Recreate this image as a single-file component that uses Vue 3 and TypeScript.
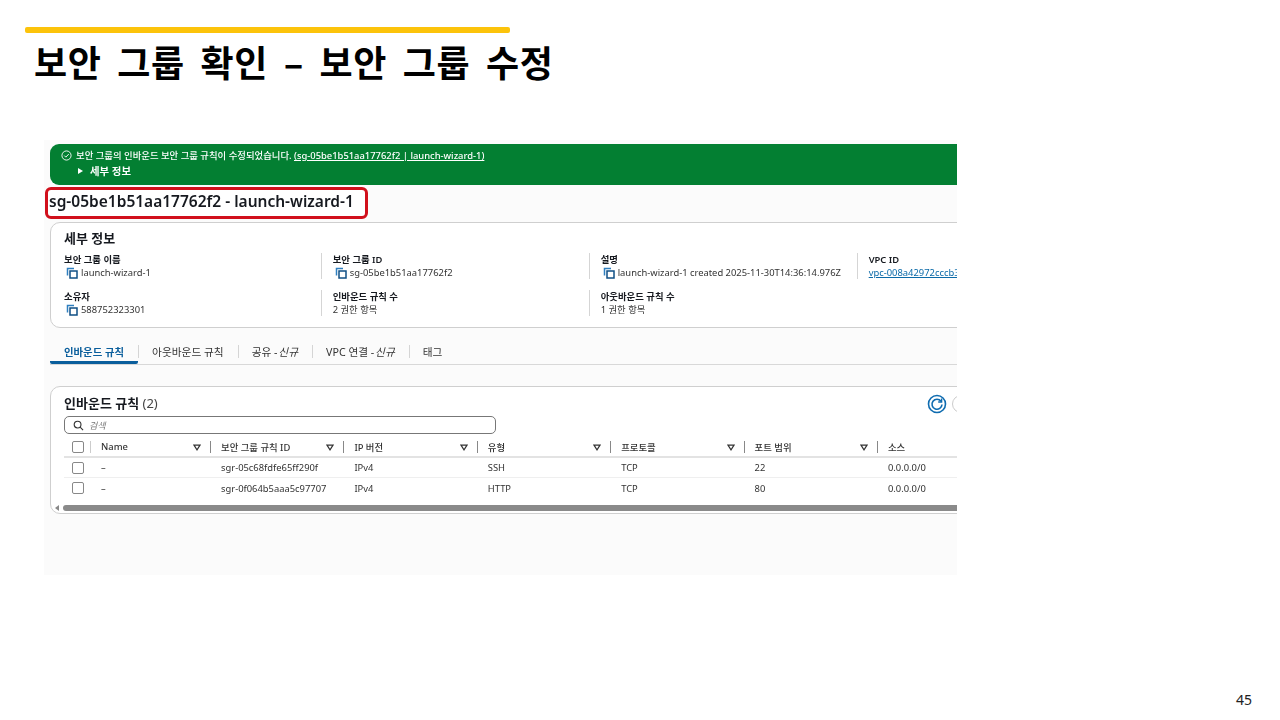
<script setup lang="ts">
interface Info { label: string; value: string; copy?: boolean; link?: boolean }
const topRow: Info[] = [
  { label: '보안 그룹 이름', value: 'launch-wizard-1', copy: true },
  { label: '보안 그룹 ID', value: 'sg-05be1b51aa17762f2', copy: true },
  { label: '설명', value: 'launch-wizard-1 created 2025-11-30T14:36:14.976Z', copy: true },
  { label: 'VPC ID', value: 'vpc-008a42972cccb3a1f', link: true },
]
const bottomRow: Info[] = [
  { label: '소유자', value: '588752323301', copy: true },
  { label: '인바운드 규칙 수', value: '2 권한 항목' },
  { label: '아웃바운드 규칙 수', value: '1 권한 항목' },
]
const tabs = [
  { text: '인바운드 규칙', active: true },
  { text: '아웃바운드 규칙' },
  { text: '공유 - ', em: '신규' },
  { text: 'VPC 연결 - ', em: '신규' },
  { text: '태그' },
]
const cols = ['Name', '보안 그룹 규칙 ID', 'IP 버전', '유형', '프로토콜', '포트 범위', '소스']
const rows = [
  ['–', 'sgr-05c68fdfe65ff290f', 'IPv4', 'SSH', 'TCP', '22', '0.0.0.0/0'],
  ['–', 'sgr-0f064b5aaa5c97707', 'IPv4', 'HTTP', 'TCP', '80', '0.0.0.0/0'],
]
</script>

<template>
  <div class="slide">
    <div class="accent"></div>
    <h1 class="heading">보안 그룹 확인 – 보안 그룹 수정</h1>

    <div class="shot">
      <div class="banner">
        <div class="banner-line">
          <svg class="ok" viewBox="0 0 12 12" width="12" height="12">
            <circle cx="6" cy="6" r="5" fill="none" stroke="#fff" stroke-width="1" />
            <path d="M3.6 6.1 5.3 7.8 8.5 4.4" fill="none" stroke="#fff" stroke-width="1" />
          </svg>
          <span>보안 그룹의 인바운드 보안 그룹 규칙이 수정되었습니다. <u>(sg-05be1b51aa17762f2 | launch-wizard-1)</u></span>
        </div>
        <div class="banner-more"><i class="caret"></i>세부 정보</div>
      </div>

      <div class="sg-title"><span>sg-05be1b51aa17762f2 - launch-wizard-1</span></div>

      <section class="card details">
        <h2 class="card-title">세부 정보</h2>
        <div v-for="(row, r) in [topRow, bottomRow]" :key="r" class="info-row">
          <div v-for="item in row" :key="item.label" class="info">
            <div class="info-label">{{ item.label }}</div>
            <div class="info-value" :class="{ link: item.link }">
              <svg v-if="item.copy" class="copy" viewBox="0 0 12 12" width="12" height="12">
                <path d="M1.5 8.5V1.5H8" fill="none" stroke="#2f7fc0" stroke-width="1.5" />
                <rect x="4" y="4" width="7" height="7" fill="none" stroke="#0f4f85" stroke-width="1.5" />
              </svg>
              <span>{{ item.value }}</span>
            </div>
          </div>
        </div>
      </section>

      <nav class="tabs">
        <div v-for="t in tabs" :key="t.text" class="tab" :class="{ active: t.active }">
          <span>{{ t.text }}<em v-if="t.em">{{ t.em }}</em></span>
        </div>
      </nav>

      <section class="card rules">
        <div class="rules-head">
          <h2 class="rules-title">인바운드 규칙 <span>(2)</span></h2>
          <div class="rules-actions">
            <svg viewBox="0 0 20 20" width="20" height="20">
              <circle cx="10" cy="10" r="8.5" fill="none" stroke="#0f6cb0" stroke-width="1.6" />
              <path d="M14 7.2A5 5 0 1 0 15 10.5" fill="none" stroke="#0f6cb0" stroke-width="1.6" />
              <path d="M14.6 4.6V8H11.2" fill="none" stroke="#0f6cb0" stroke-width="1.4" />
            </svg>
            <i class="ghost-btn"></i>
          </div>
        </div>
        <div class="search">
          <svg viewBox="0 0 12 12" width="11" height="11">
            <circle cx="5" cy="5" r="3.7" fill="none" stroke="#333" stroke-width="1.2" />
            <path d="M7.8 7.8 11 11" stroke="#333" stroke-width="1.2" />
          </svg>
          <em>검색</em>
        </div>
        <div class="table">
          <div class="tr th">
            <div class="check-cell"><i class="check"></i></div>
            <div v-for="c in cols" :key="c" class="td">
              <span>{{ c }}</span>
              <svg v-if="c !== '소스'" class="sort" viewBox="0 0 8 7" width="8" height="7">
                <path d="M1 1.2H7L4 5.8Z" fill="none" stroke="#333" stroke-width="1.2" />
              </svg>
            </div>
          </div>
          <div v-for="(row, i) in rows" :key="i" class="tr">
            <div class="check-cell"><i class="check"></i></div>
            <div v-for="(v, j) in row" :key="j" class="td"><span>{{ v }}</span></div>
          </div>
        </div>
        <div class="scroll">
          <i class="scroll-arrow"></i>
          <div class="scroll-thumb"></div>
        </div>
      </section>
    </div>

    <div class="page-no">45</div>
  </div>
</template>

<style>
html, body { margin: 0; background: #fff; }
</style>

<style scoped>
.slide {
  width: 1280px;
  height: 720px;
  box-sizing: border-box;
  display: flex;
  flex-direction: column;
  overflow: hidden;
  background: #fff;
  color: #16191f;
  font-family: "Noto Sans", "Noto Sans CJK KR", sans-serif;
}
.accent {
  width: 485px;
  height: 6px;
  margin: 27px 0 0 25px;
  border-radius: 2px;
  background: #fcc30b;
  flex: none;
}
.heading {
  margin: 4px 0 0 34px;
  font: 700 36px/48px "Noto Sans CJK KR", sans-serif;
  letter-spacing: 0.6px;
  word-spacing: 7px;
  color: #000;
  white-space: nowrap;
}
.shot {
  width: 913px;
  height: 435px;
  margin: 55px 0 0 44px;
  box-sizing: border-box;
  padding-top: 4px;
  background: #fbfbfb;
  overflow: hidden;
  flex: none;
  filter: blur(0.3px);
}
.banner {
  margin-left: 6px;
  width: 1000px;
  height: 41px;
  box-sizing: border-box;
  padding: 4px 0 0 11px;
  border-radius: 9px 0 0 9px;
  background: #037f32;
  color: #fff;
  font-size: 9.4px;
  font-weight: 500;
}
.banner-line { display: flex; align-items: center; gap: 4px; height: 14px; white-space: nowrap; }
.ok { flex: none; width: 11px; height: 11px; }
.banner-more { display: flex; align-items: center; margin: 1px 0 0 17px; height: 15px; font-size: 10.4px; font-weight: 600; }
.caret { width: 0; height: 0; margin-right: 7px; border-left: 5px solid #fff; border-top: 3px solid transparent; border-bottom: 3px solid transparent; }
.sg-title {
  width: 323px;
  height: 32px;
  margin: 2px 0 3px 1px;
  box-sizing: border-box;
  padding-bottom: 4px;
  display: flex;
  align-items: center;
  border: 3px solid #d1101c;
  border-radius: 6px;
  background: #fff;
  font-size: 15.5px;
  font-weight: 600;
  white-space: nowrap;
}
.sg-title span { margin-left: 1px; }
.card {
  margin-left: 6px;
  width: 1000px;
  box-sizing: border-box;
  background: #fff;
  border: 1px solid #cfcfcf;
  border-radius: 10px;
}
.details { height: 106px; padding: 6px 0 0 13px; }
.card-title { margin: 0; font-size: 13px; line-height: 18px; font-weight: 600; }
.info-row { display: grid; grid-template-columns: 257.7px 257px 257px 1fr; column-gap: 11px; margin: 6px 0 0; height: 26px; }
.info-row + .info-row { margin-top: 11px; }
.info { position: relative; font-size: 9.4px; line-height: 13px; white-space: nowrap; }
.info + .info::before { content: ""; position: absolute; left: -12px; top: 0; bottom: 0; width: 1px; background: #d5d5d5; }
.info-label { font-weight: 600; }
.info-value { display: flex; align-items: center; gap: 3px; color: #333; height: 13px; }
.info-value.link { color: #0b6aa8; text-decoration: underline; }
.copy { margin-left: 2px; flex: none; }
.tabs {
  display: flex;
  height: 37px;
  margin-left: 6px;
  width: 1000px;
  box-sizing: border-box;
  border-bottom: 1px solid #d8d8d8;
  font-size: 10.7px;
}
.tab { position: relative; display: flex; align-items: center; height: 34px; box-sizing: border-box; margin-top: 1px; padding: 10px 14px 0 14px; color: #333; white-space: nowrap; }
.tab + .tab::before { content: ""; position: absolute; left: 0; top: 16px; height: 13px; width: 1px; background: #d5d5d5; }
.tab em { font-style: italic; margin-left: -2px; }
.tab.active { color: #0a5e9c; font-size: 10.4px; font-weight: 600; border-bottom: 3px solid #0a5e9c; height: 35px; margin-bottom: -1px; border-radius: 0 0 2px 2px; padding-top: 12px; }
.rules { height: 128px; margin-top: 21px; padding: 0 0 0 13px; }
.rules-head { display: flex; align-items: center; height: 29px; width: 986px; }
.rules-title { margin: 2px 0 0; font-size: 13px; font-weight: 600; flex: none; width: 863px; }
.rules-title span { font-weight: 400; color: #444; }
.rules-actions { display: flex; align-items: center; gap: 5px; margin-top: 4px; flex: none; }
.ghost-btn { display: block; width: 16px; height: 16px; border: 1.5px solid #ccc; border-radius: 50%; flex: none; }
.search {
  width: 432px;
  height: 18px;
  box-sizing: border-box;
  display: flex;
  align-items: center;
  gap: 5px;
  padding-left: 8px;
  border: 1px solid #777;
  border-radius: 5px;
  font-size: 9px;
  color: #777;
}
.table { margin: 3px 0 0; font-size: 9.4px; color: #333; }
.tr { display: grid; grid-template-columns: 26px 120px repeat(6, 133.4px); height: 19px; align-items: center; border-bottom: 1px solid #efefef; }
.tr.th { height: 19px; border-bottom: 2px solid #e3e3e3; font-weight: 500; }
.tr:last-child { height: 20px; border-bottom: none; }
.check-cell { padding-left: 8px; }
.check { display: block; width: 10px; height: 10px; border: 1px solid #888; border-radius: 2px; background: #fff; }
.td { position: relative; padding-left: 11px; display: flex; align-items: center; white-space: nowrap; }
.th .td { height: 12px; }
.th .td::before { content: ""; position: absolute; left: 0; top: 0; bottom: 0; width: 1px; background: #888; }
.th .td:nth-child(2)::before { background: #ccc; }
.sort { position: absolute; right: 9px; top: 3px; }
.scroll { display: flex; align-items: center; margin: 6px 0 0 -9px; height: 7px; }
.scroll-arrow { width: 0; height: 0; margin-right: 4px; border-right: 4px solid #888; border-top: 3px solid transparent; border-bottom: 3px solid transparent; }
.scroll-thumb { width: 960px; height: 6px; border-radius: 3px 0 0 3px; background: #8a8a8a; }
.page-no { margin: auto 28px 11px 0; text-align: right; font: 14px/18px "Noto Sans", sans-serif; color: #222; }
</style>
